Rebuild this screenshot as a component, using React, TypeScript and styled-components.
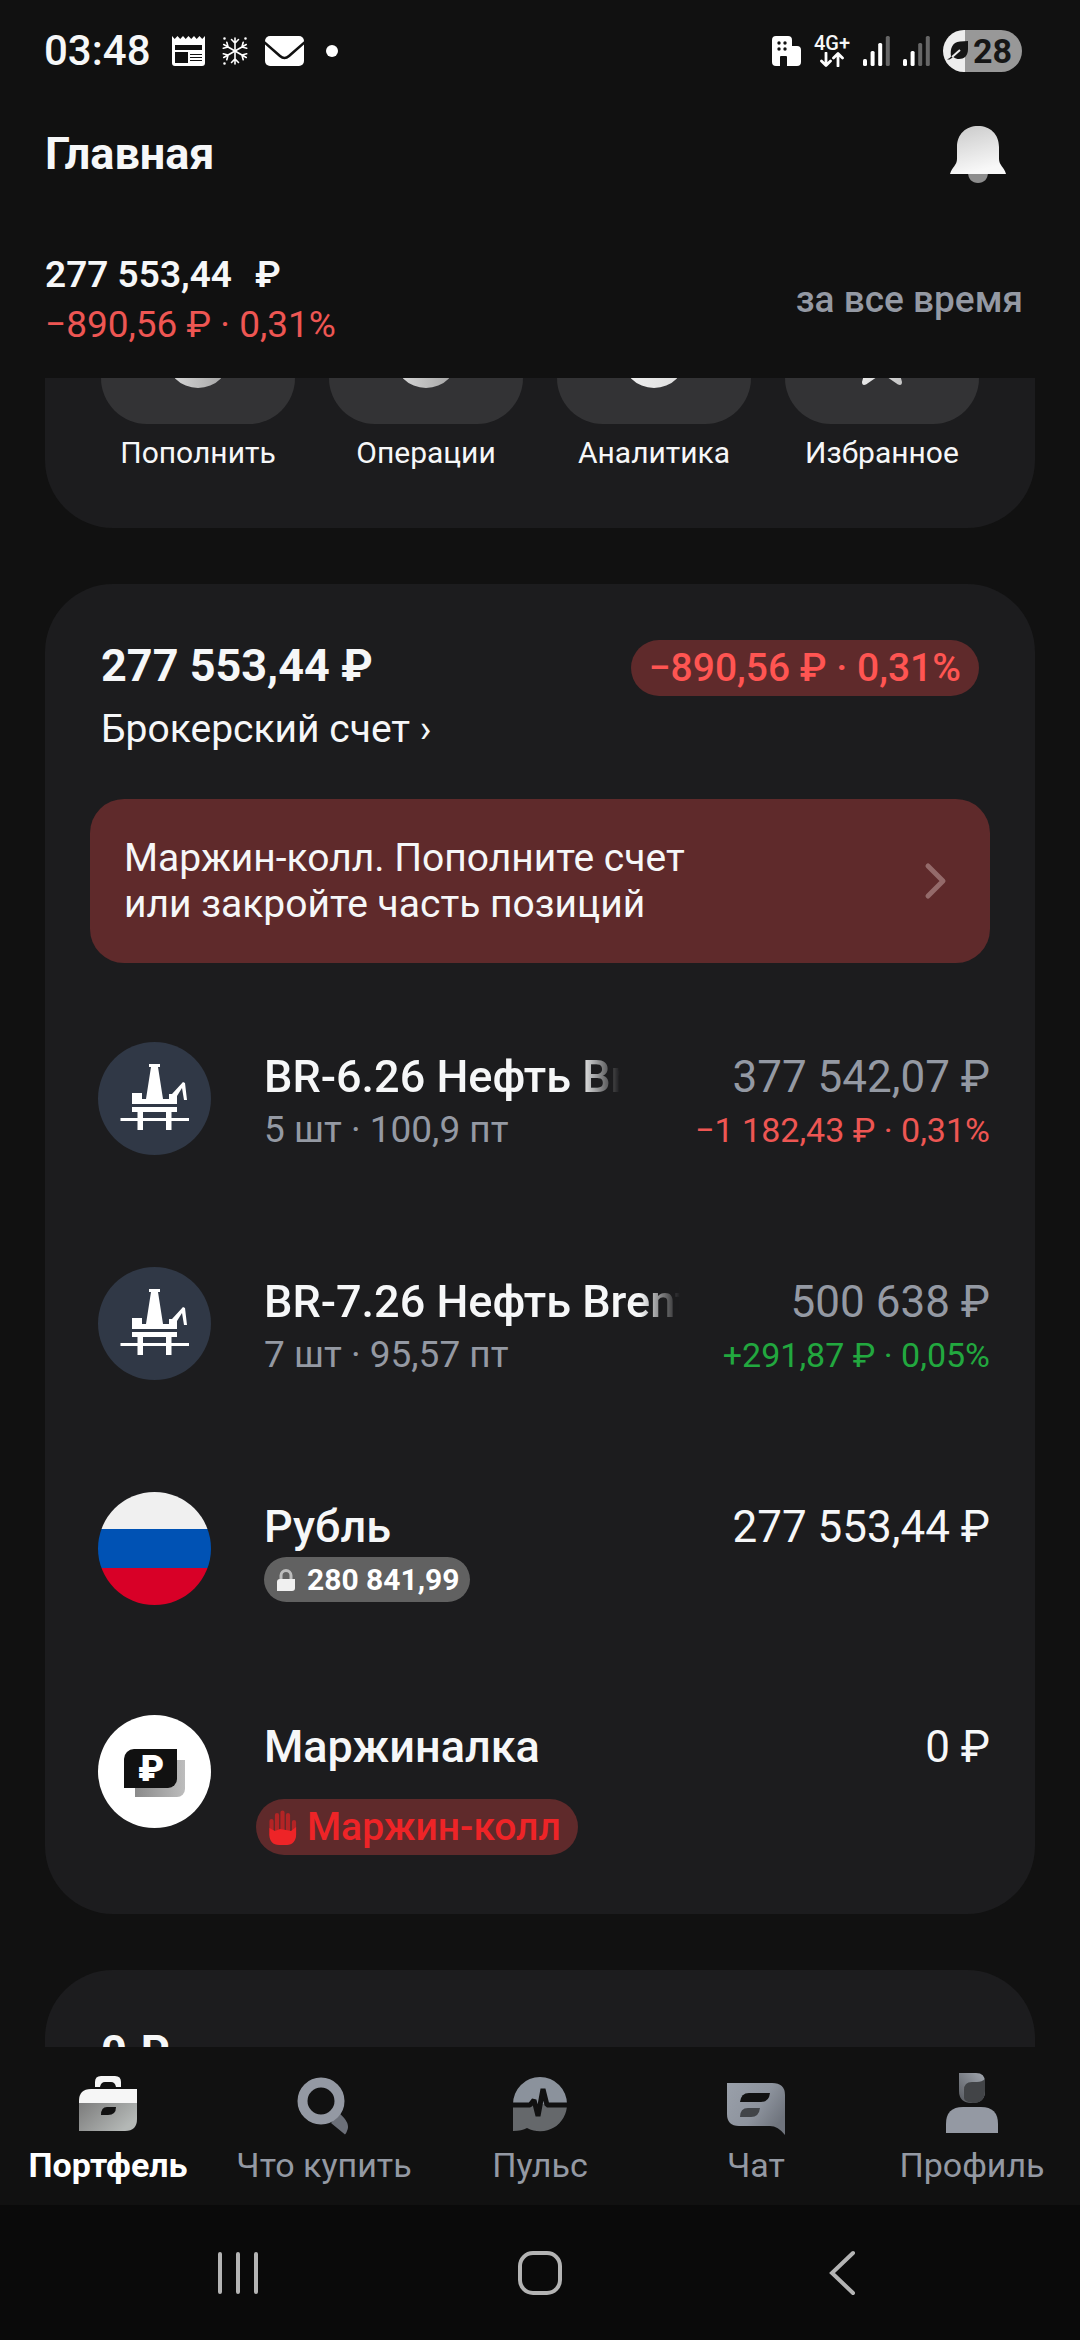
import React, { useLayoutEffect, useRef } from "react";
import styled, { createGlobalStyle, css } from "styled-components";

const color = {
  page: "#111111",
  card: "#1c1c1e",
  tile: "#333335",
  text: "#f6f7f8",
  muted: "#9499a3",
  red: "#ee5653",
  redBright: "#ff5552",
  alert: "#ee2427",
  danger: "#5f2a2b",
  green: "#22a83f",
  chip: "#616161",
  system: "#0a0a0a",
  systemIcon: "#b4b4b4",
};

const GlobalStyle = createGlobalStyle`
  * { box-sizing: border-box; }
  body { margin: 0; background: ${color.page}; }
  h1, h2, p, ul { margin: 0; padding: 0; font-weight: inherit; font-size: inherit; }
  ul { list-style: none; }
  a { color: inherit; text-decoration: none; }
  button { border: 0; padding: 0; background: none; color: inherit; font: inherit; cursor: pointer; }
  svg { display: block; flex: none; }
`;

/* ---------- layout ---------- */

const Page = styled.div`
  display: flex;
  flex-direction: column;
  height: 100vh;
  background: ${color.page};
  color: ${color.text};
  font-family: Roboto, "Noto Sans", sans-serif;
`;

const StatusBar = styled.div`
  display: flex;
  justify-content: space-between;
  align-items: center;
  flex: none;
  height: 102px;
  padding: 0 58px 0 44px;
`;

const StatusGroup = styled.div<{ $gap: number }>`
  display: flex;
  align-items: center;
  gap: ${(p) => p.$gap}px;
`;

const Clock = styled.time`
  font-size: 42px;
  line-height: 48px;
  font-weight: 500;
  margin-right: 4px;
`;

const Dot = styled.span`
  width: 12px;
  height: 12px;
  margin-left: 5px;
  border-radius: 50%;
  background: #fff;
`;

const Network = styled.div`
  display: flex;
  flex-direction: column;
  align-items: center;
  gap: 1px;
  font-size: 20px;
  line-height: 16px;
  font-weight: 500;
`;

const Battery = styled.div`
  display: flex;
  align-items: center;
  gap: 4px;
  height: 42px;
  padding: 0 10px 0 4px;
  border-radius: 21px;
  background: linear-gradient(to right, #ededed 22px, #989898 22px);
  color: #161616;
  font-size: 34px;
  line-height: 42px;
  font-weight: 700;
`;

const TitleBar = styled.header`
  display: flex;
  justify-content: space-between;
  align-items: center;
  flex: none;
  height: 104px;
  padding: 0 74px 0 45px;
`;

const Title = styled.h1`
  font-size: 45px;
  line-height: 52px;
  font-weight: 700;
`;

const Summary = styled.section`
  display: flex;
  justify-content: space-between;
  align-items: center;
  flex: none;
  padding: 44px 57px 28px 45px;
  font-size: 37px;
  line-height: 50px;
`;

const Total = styled.p`
  display: flex;
  gap: 23px;
  font-weight: 600;
`;

const Delta = styled.p<{ $up?: boolean }>`
  color: ${(p) => (p.$up ? color.green : color.red)};
`;

const Period = styled.button`
  && {
    color: ${color.muted};
    font-weight: 500;
  }
`;

const Feed = styled.main`
  display: flex;
  flex-direction: column;
  gap: 56px;
  flex: 1;
  min-height: 0;
  padding: 0 45px;
  overflow-y: auto;
  scrollbar-width: none;
`;

const cardStyle = css`
  flex: none;
  border-radius: 68px;
  background: ${color.card};
`;

/* ---------- quick actions ---------- */

const Actions = styled.section`
  ${cardStyle}
  display: grid;
  grid-template-columns: repeat(4, 1fr);
  gap: 34px;
  padding: 56px 56px 55px;
`;

const Action = styled.button`
  display: flex;
  flex-direction: column;
  gap: 9px;
`;

const ActionTile = styled.span`
  display: grid;
  place-items: center;
  width: 100%;
  height: 136px;
  border-radius: 46px;
  background: ${color.tile};
`;

const ActionLabel = styled.span`
  align-self: center;
  font-size: 30px;
  line-height: 40px;
`;

/* ---------- account card ---------- */

const Account = styled.section<{ $tail: number }>`
  ${cardStyle}
  padding: 56px 45px ${(p) => p.$tail}px;
`;

const AccountHead = styled.div`
  display: flex;
  justify-content: space-between;
  align-items: flex-start;
  padding: 0 11px;
`;

const AccountSum = styled.h2`
  font-size: 45px;
  line-height: 52px;
  font-weight: 700;
`;

const AccountLink = styled.a`
  display: block;
  margin-top: 12px;
  font-size: 39px;
  line-height: 50px;
`;

const Pill = styled.span`
  display: inline-flex;
  align-items: center;
  height: 56px;
  padding: 0 18px;
  border-radius: 28px;
  background: ${color.danger};
  color: ${color.redBright};
  font-size: 39px;
  line-height: 56px;
  font-weight: 500;
`;

const Banner = styled.button`
  display: flex;
  justify-content: space-between;
  align-items: center;
  width: 100%;
  margin-top: 45px;
  && {
    padding: 36px 42px 36px 34px;
    background: ${color.danger};
    font-size: 39px;
    line-height: 46px;
    text-align: left;
  }
  border-radius: 34px;
`;

const Positions = styled.ul`
  display: flex;
  flex-direction: column;
  gap: 110px;
  margin-top: 79px;
  padding-left: 8px;
`;

const Position = styled.a<{ $tight?: boolean }>`
  display: flex;
  gap: 53px;
  min-height: ${(p) => (p.$tight ? 113 : 115)}px;
`;

const Column = styled.div<{ $end?: boolean; $tight?: boolean }>`
  display: flex;
  flex-direction: column;
  align-items: ${(p) => (p.$end ? "flex-end" : "flex-start")};
  margin-left: ${(p) => (p.$end ? "auto" : "0")};
  padding-top: ${(p) => (p.$tight ? 6 : 9)}px;
  gap: 2px;
  min-width: 0;
  white-space: nowrap;
`;

const Name = styled.span<{ $fade?: number }>`
  font-size: 45px;
  line-height: 52px;
  font-weight: 500;
  ${(p) =>
    p.$fade &&
    css`
      width: ${p.$fade}px;
      overflow: hidden;
      mask-image: linear-gradient(to right, #000 calc(100% - 40px), transparent);
    `}
`;

const Value = styled.span<{ $muted?: boolean }>`
  font-size: 44px;
  line-height: 52px;
  color: ${(p) => (p.$muted ? color.muted : color.text)};
`;

const Quantity = styled.span`
  color: ${color.muted};
  font-size: 37px;
  line-height: 50px;
`;

const Change = styled(Delta)`
  font-size: 34px;
  line-height: 50px;
`;

const Locked = styled.span`
  display: inline-flex;
  align-items: center;
  gap: 12px;
  height: 45px;
  margin-top: 2px;
  padding: 0 10px 0 13px;
  border-radius: 23px;
  background: ${color.chip};
  color: #fff;
  font-size: 30px;
  line-height: 45px;
  font-weight: 700;
`;

const MarginCall = styled(Pill)`
  gap: 10px;
  margin: 24px 0 0 -8px;
  padding: 0 17px 0 13px;
  color: ${color.alert};
`;

/* ---------- bottom bars ---------- */

const TabBar = styled.nav`
  display: grid;
  grid-template-columns: repeat(5, 1fr);
  flex: none;
  height: 158px;
  padding-top: 26px;
`;

const Tab = styled.a<{ $active?: boolean }>`
  display: flex;
  flex-direction: column;
  align-items: center;
  gap: 8px;
  color: ${(p) => (p.$active ? "#fff" : color.muted)};
  font-size: 34px;
  line-height: 44px;
  font-weight: ${(p) => (p.$active ? 700 : 400)};
  white-space: nowrap;
`;

const SystemNav = styled.nav`
  display: grid;
  grid-template-columns: repeat(3, 1fr);
  flex: none;
  height: 135px;
  padding: 0 87px;
  background: ${color.system};
`;

const SystemButton = styled.button`
  display: grid;
  place-items: center;
`;

/* ---------- icons ---------- */

const NewsIcon = () => (
  <svg width="33" height="30" viewBox="0 0 33 30">
    <path
      fill="#fff"
      d="M0 0l2.7 3L5.500 0l2.700 3L11 0l2.700 3L16.500 0l2.700 3L22 0l2.700 3L27.500 0l2.700 3L33 0v27a3 3 0 0 1-3 3H3a3 3 0 0 1-3-3z"
    />
    <path fill={color.page} d="M3 9h27v5H3zM3 16h13v11H3zM18 18h12v1H18zM18 21h12v1H18zM18 24h12v1H18z" />
  </svg>
);

const SnowIcon = () => (
  <svg width="26" height="30" viewBox="-13 -15 26 30" stroke="#fff" strokeWidth="1.6" strokeLinecap="round" fill="none">
    {[0, 60, 120, 180, 240, 300].map((a) => (
      <path key={a} transform={`rotate(${a})`} d="M0 0V-13M-3.500-11.500L0-8L3.500-11.500" />
    ))}
    <path d="M-10.500-12.500v0M10.500-12.500v0M-10.500 12.500v0" strokeWidth="2.600" />
  </svg>
);

const MailIcon = () => (
  <svg width="39" height="30" viewBox="0 0 39 30">
    <rect width="39" height="30" rx="5" fill="#fff" />
    <path d="M-1 6L15 20q4.500 4 9 0L40 6" fill="none" stroke={color.page} strokeWidth="2.600" />
  </svg>
);

const BuildingIcon = () => (
  <svg width="29" height="30" viewBox="0 0 29 30">
    <path
      fill="#fff"
      d="M4 0h12a4 4 0 0 1 4 4v6h5a4 4 0 0 1 4 4v12a4 4 0 0 1-4 4H15v-9a1 1 0 0 0-1-1H9a1 1 0 0 0-1 1v9H4a4 4 0 0 1-4-4V4a4 4 0 0 1 4-4z"
    />
    <g fill={color.page}>
      <circle cx="7" cy="7" r="1.700" />
      <circle cx="13" cy="7" r="1.700" />
      <circle cx="7" cy="13" r="1.700" />
      <circle cx="13" cy="13" r="1.700" />
    </g>
  </svg>
);

const TrafficIcon = () => (
  <svg width="24" height="15" viewBox="0 0 24 15" fill="none" stroke="#fff" strokeWidth="2.800" strokeLinecap="round" strokeLinejoin="round">
    <path d="M6 1v12M1.500 9L6 13.500L10.500 9M18 14V2M13.500 6L18 1.500L22.500 6" />
  </svg>
);

const SignalIcon = ({ level }: { level: number }) => (
  <svg width="27" height="30" viewBox="0 0 27 30">
    {[7, 15, 23, 30].map((h, i) => (
      <rect key={h} x={i * 7.600} y={30 - h} width="4" height={h} rx="1.500" fill={i < level ? "#fff" : "#666"} />
    ))}
  </svg>
);

const LeafIcon = () => (
  <svg width="22" height="22" viewBox="0 0 22 22">
    <path fill="#161616" d="M21 1v8c0 7-4 10-9 10-2 0-4-.5-5.500-2l-4 2.500L0 19.500c2-1 3-1.500 4-3C3 9 5 2 13 1.500z" />
    <path d="M5 17L13 10" stroke="#ededed" strokeWidth="2" />
  </svg>
);

const BellIcon = () => (
  <svg width="56" height="57" viewBox="0 0 56 57">
    <defs>
      <linearGradient id="bell" x1="0" y1="0" x2="0.300" y2="1">
        <stop offset="0" stopColor="#c9c9c9" />
        <stop offset="1" stopColor="#f8f8f8" />
      </linearGradient>
    </defs>
    <path fill="#8d8d8d" d="M18 46h20c0 7-4 11-10 11s-10-4-10-11z" />
    <path fill="url(#bell)" d="M7 21C7 8 16 0 28 0s21 8 21 21v12c0 6 5 8 7 15H0c2-7 7-9 7-15z" />
  </svg>
);

const ActionIcon = ({ kind }: { kind: "circle" | "light" | "star" }) => (
  <svg width="66" height="64" viewBox="0 0 66 64">
    <defs>
      <linearGradient id={`action-${kind}`} x1="0" y1="0" x2="1" y2="0">
        <stop offset="0" stopColor={kind === "circle" ? "#dcdcdc" : "#f0f0f0"} />
        <stop offset="1" stopColor={kind === "circle" ? "#a0a0a0" : kind === "star" ? "#bdbdbd" : "#dcdcdc"} />
      </linearGradient>
    </defs>
    {kind === "star" ? (
      <path
        fill="url(#action-star)"
        d="M33 2l9 19 21 2.500-15.500 14.500L53 58q0 4-4 2.500L33 49.500 17 60.500q-4 1.500-4-2.500L18.500 38 3 23.500 24 21z"
      />
    ) : (
      <circle cx="33" cy="32" r="32" fill={`url(#action-${kind})`} />
    )}
  </svg>
);

const ChevronIcon = () => (
  <svg width="24" height="38" viewBox="0 0 24 38" fill="none" stroke="#946a6a" strokeWidth="5" strokeLinecap="round" strokeLinejoin="round">
    <path d="M4 4L19 19L4 34" />
  </svg>
);

const RigIcon = () => (
  <svg width="113" height="113" viewBox="0 0 113 113" role="img" aria-label="Нефть">
    <circle cx="56.500" cy="56.500" r="56.500" fill="#303846" />
    <path
      fill="#fff"
      d="M51 22h11v3h-2l5 32h6v-5h3L85 40l2 1 2 17h-3L84 46l-5 8v8H34V51h10v6h4l5-32h-2zM34 65h45v5h-5.500v6H91v3H73.500v9H68v-9H45v9h-5.500v-9H22.500v-3h17v-6H34zM45 70v6h23v-6z"
      fillRule="evenodd"
    />
  </svg>
);

const FlagIcon = () => (
  <svg width="113" height="113" viewBox="0 0 113 113" role="img" aria-label="Рубль">
    <defs>
      <clipPath id="round">
        <circle cx="56.500" cy="56.500" r="56.500" />
      </clipPath>
    </defs>
    <g clipPath="url(#round)">
      <path fill="#f0f0f0" d="M0 0h113v37H0z" />
      <path fill="#0052b4" d="M0 37h113v39H0z" />
      <path fill="#d80027" d="M0 76h113v37H0z" />
    </g>
  </svg>
);

const MarginIcon = () => (
  <svg width="113" height="113" viewBox="0 0 113 113" role="img" aria-label="Маржиналка">
    <defs>
      <linearGradient id="shade" x1="0" y1="0" x2="1" y2="0">
        <stop offset="0" stopColor="#8a8a8a" />
        <stop offset="1" stopColor="#bdbdbd" />
      </linearGradient>
    </defs>
    <circle cx="56.500" cy="56.500" r="56.500" fill="#fff" />
    <path fill="url(#shade)" d="M37 45h50v29a8 8 0 0 1-8 8H37z" />
    <path fill="#111" d="M36 34h43v30a9 9 0 0 1-9 9H26V44a10 10 0 0 1 10-10z" />
    <text x="53" y="66" textAnchor="middle" fontSize="36" fontWeight="900" fill="#fff">
      ₽
    </text>
  </svg>
);

const LockIcon = () => (
  <svg width="18" height="22" viewBox="0 0 18 22">
    <path d="M4 11V6.500a5 5 0 0 1 10 0V11" fill="none" stroke="#bdbdbd" strokeWidth="3" />
    <path fill="#f0f0f0" d="M3 10h15v9a3 3 0 0 1-3 3H0v-9a3 3 0 0 1 3-3z" />
  </svg>
);

const HandIcon = () => (
  <svg width="28" height="35" viewBox="0 0 28 35">
    <path
      d="M2.500 11v14M8 5v18M13.500 2.500v20M19 5v18M25 12v13"
      stroke="#b32425"
      strokeWidth="4.200"
      strokeLinecap="round"
    />
    <path fill={color.alert} d="M.400 18L6 21l5-2 6 1 5 1 5.100-4v8c0 6-4 10-9 10h-8C4 35 .400 31 .400 25z" />
  </svg>
);

const BriefcaseIcon = () => (
  <svg width="62" height="62" viewBox="0 0 62 62">
    <defs>
      <linearGradient id="case" x1="0" y1="0" x2="1" y2="0.500">
        <stop offset="0" stopColor="#7c7c7c" />
        <stop offset="1" stopColor="#b4b8b6" />
      </linearGradient>
    </defs>
    <path fill="#f6f6f6" d="M18 14V9q0-6 6-6h14q6 0 6 6v5h-5q-1-5-5-5h-6q-4 0-5 5z" />
    <path fill="#f6f6f6" d="M14 16h46v14H2v-2q0-12 12-12z" />
    <path fill="url(#case)" d="M2 30h58v16q0 12-12 12H2z" />
    <path fill={color.page} d="M30 34h9q0 8-8 8h-7q0-8 6-8z" />
  </svg>
);

const SearchIcon = () => (
  <svg width="62" height="62" viewBox="0 0 62 62">
    <path fill="#6c7079" d="M38 50L46 40q12 10 8 18-1 3-2 3.500z" />
    <circle cx="28" cy="28" r="18.500" fill="none" stroke="#9499a3" strokeWidth="10" />
  </svg>
);

const PulseIcon = () => (
  <svg width="62" height="62" viewBox="0 0 62 62">
    <path fill="#8b929c" d="M4 31a27 27 0 0 1 54 0z" />
    <path fill="#65686b" d="M4 31h54a27 27 0 0 1-40 24q-5 3-14 3z" />
    <path
      d="M2 32h19l4-5 4 16 5-27 4 16h22"
      fill="none"
      stroke={color.page}
      strokeWidth="5"
      strokeLinejoin="bevel"
    />
  </svg>
);

const ChatIcon = () => (
  <svg width="62" height="62" viewBox="0 0 62 62">
    <defs>
      <linearGradient id="chat" x1="0" y1="0" x2="1" y2="0.600">
        <stop offset="0" stopColor="#9aa0aa" />
        <stop offset="0.600" stopColor="#8d939d" />
        <stop offset="1" stopColor="#6f747d" />
      </linearGradient>
    </defs>
    <path fill="url(#chat)" d="M2 10h45q13 0 13 12v40q-7-9-15-9H14Q2 53 2 41z" />
    <path fill={color.page} d="M24 20h21q-1 9-9 9H15q1-9 9-9z" />
    <path fill="#414448" d="M23 35h12q-1 9-9 9H15q0-9 8-9z" />
  </svg>
);

const ProfileIcon = () => (
  <svg width="62" height="62" viewBox="0 0 62 62">
    <defs>
      <linearGradient id="hair" x1="1" y1="0" x2="0" y2="1">
        <stop offset="0" stopColor="#a3a8b0" />
        <stop offset="1" stopColor="#55585e" />
      </linearGradient>
    </defs>
    <path fill="url(#hair)" d="M18 0h17q9 0 9 9v9q0 12-13 12T18 18z" />
    <path fill="#424447" d="M23 17q0-8 8-8h5q5 0 8-3v12q0 12-12 12-9-1-9-5z" />
    <path fill="#9499a3" d="M5 60V51q0-17 17-17h18q17 0 17 17v9z" />
  </svg>
);

const RecentsIcon = () => (
  <svg width="42" height="44" viewBox="0 0 42 44" stroke={color.systemIcon} strokeWidth="4" strokeLinecap="round">
    <path d="M3 3v38M21 3v38M39 3v38" />
  </svg>
);

const HomeIcon = () => (
  <svg width="44" height="44" viewBox="0 0 44 44" fill="none" stroke={color.systemIcon} strokeWidth="4">
    <rect x="2" y="2" width="40" height="40" rx="13" />
  </svg>
);

const BackIcon = () => (
  <svg width="28" height="46" viewBox="0 0 28 46" fill="none" stroke={color.systemIcon} strokeWidth="4" strokeLinecap="round">
    <path d="M25 3L4 23L25 43" />
  </svg>
);

/* ---------- data ---------- */

const actions = [
  { label: "Пополнить", kind: "circle" },
  { label: "Операции", kind: "circle" },
  { label: "Аналитика", kind: "light" },
  { label: "Избранное", kind: "star" },
] as const;

const futures = [
  { name: "BR-6.26 Нефть Brent", fade: 356, qty: "5 шт · 100,9 пт", value: "377 542,07 ₽", change: "−1 182,43 ₽ · 0,31%", up: false },
  { name: "BR-7.26 Нефть Brent", fade: 416, qty: "7 шт · 95,57 пт", value: "500 638 ₽", change: "+291,87 ₽ · 0,05%", up: true },
];

const tabs = [
  { label: "Портфель", Icon: BriefcaseIcon },
  { label: "Что купить", Icon: SearchIcon },
  { label: "Пульс", Icon: PulseIcon },
  { label: "Чат", Icon: ChatIcon },
  { label: "Профиль", Icon: ProfileIcon },
];

const INITIAL_SCROLL = 146;

export default function App() {
  const feed = useRef<HTMLElement>(null);

  useLayoutEffect(() => {
    if (feed.current) feed.current.scrollTop = INITIAL_SCROLL;
  }, []);

  return (
    <Page>
      <GlobalStyle />
      <StatusBar>
        <StatusGroup $gap={17}>
          <Clock>03:48</Clock>
          <NewsIcon />
          <SnowIcon />
          <MailIcon />
          <Dot />
        </StatusGroup>
        <StatusGroup $gap={13}>
          <BuildingIcon />
          <Network>
            4G+
            <TrafficIcon />
          </Network>
          <SignalIcon level={3} />
          <SignalIcon level={2} />
          <Battery>
            <LeafIcon />
            28
          </Battery>
        </StatusGroup>
      </StatusBar>

      <TitleBar>
        <Title>Главная</Title>
        <button aria-label="Уведомления">
          <BellIcon />
        </button>
      </TitleBar>

      <Summary>
        <div>
          <Total>
            <span>277 553,44</span>
            <span>₽</span>
          </Total>
          <Delta>−890,56 ₽ · 0,31%</Delta>
        </div>
        <Period>за все время</Period>
      </Summary>

      <Feed ref={feed}>
        <Actions>
          {actions.map((a) => (
            <Action key={a.label}>
              <ActionTile>
                <ActionIcon kind={a.kind} />
              </ActionTile>
              <ActionLabel>{a.label}</ActionLabel>
            </Action>
          ))}
        </Actions>

        <Account $tail={59}>
          <AccountHead>
            <div>
              <AccountSum>277 553,44 ₽</AccountSum>
              <AccountLink href="#account">Брокерский счет ›</AccountLink>
            </div>
            <Pill>−890,56 ₽ · 0,31%</Pill>
          </AccountHead>

          <Banner>
            <span>
              Маржин-колл. Пополните счет
              <br />
              или закройте часть позиций
            </span>
            <ChevronIcon />
          </Banner>

          <Positions>
            {futures.map((f) => (
              <li key={f.name}>
                <Position href="#position">
                  <RigIcon />
                  <Column>
                    <Name $fade={f.fade}>{f.name}</Name>
                    <Quantity>{f.qty}</Quantity>
                  </Column>
                  <Column $end>
                    <Value $muted>{f.value}</Value>
                    <Change $up={f.up}>{f.change}</Change>
                  </Column>
                </Position>
              </li>
            ))}
            <li>
              <Position href="#rub" $tight>
                <FlagIcon />
                <Column>
                  <Name>Рубль</Name>
                  <Locked>
                    <LockIcon />
                    280 841,99
                  </Locked>
                </Column>
                <Column $end>
                  <Value>277 553,44 ₽</Value>
                </Column>
              </Position>
            </li>
            <li>
              <Position href="#margin">
                <MarginIcon />
                <Column $tight>
                  <Name>Маржиналка</Name>
                  <MarginCall>
                    <HandIcon />
                    Маржин-колл
                  </MarginCall>
                </Column>
                <Column $end $tight>
                  <Value>0 ₽</Value>
                </Column>
              </Position>
            </li>
          </Positions>
        </Account>

        <Account $tail={200}>
          <AccountHead>
            <AccountSum>0 ₽</AccountSum>
          </AccountHead>
        </Account>
      </Feed>

      <TabBar>
        {tabs.map(({ label, Icon }, i) => (
          <Tab key={label} href="#tab" $active={i === 0}>
            <Icon />
            {label}
          </Tab>
        ))}
      </TabBar>

      <SystemNav>
        <SystemButton aria-label="Недавние">
          <RecentsIcon />
        </SystemButton>
        <SystemButton aria-label="Домой">
          <HomeIcon />
        </SystemButton>
        <SystemButton aria-label="Назад">
          <BackIcon />
        </SystemButton>
      </SystemNav>
    </Page>
  );
}
